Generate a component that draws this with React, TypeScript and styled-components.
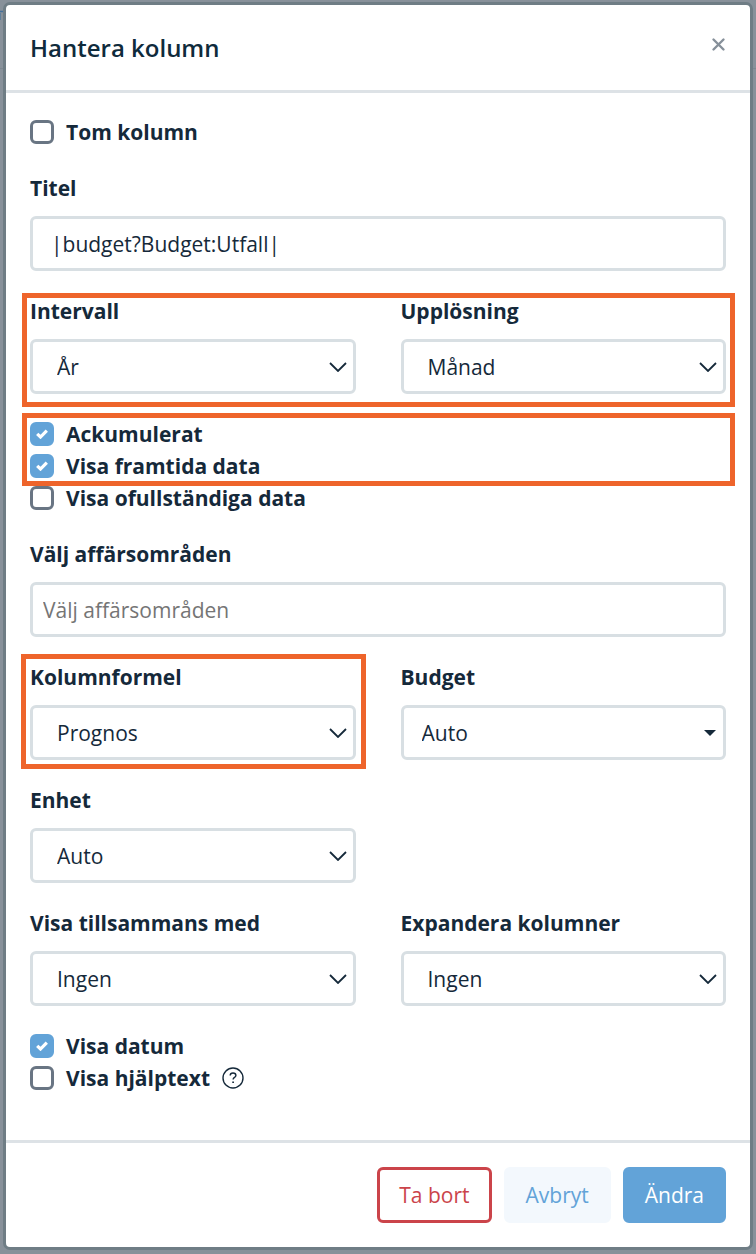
import React, { useId, useState } from "react";
import styled, { createGlobalStyle, css } from "styled-components";

const ink = "#15293a";
const line = "#d8dfe3";
const blue = "#62a3d8";
const red = "#cb444a";
const orange = "#ee642b";

const GlobalStyle = createGlobalStyle`
  *, *::before, *::after { box-sizing: border-box; }
  body {
    margin: 0;
    background: #88919a;
    color: ${ink};
    font-family: "Open Sans", "Noto Sans", sans-serif;
    font-size: 21px;
    line-height: 32px;
    font-variant-ligatures: none;
  }
  button, input, select { font: inherit; color: inherit; }
`;

const Backdrop = styled.div`
  position: relative;
  min-height: 100vh;
  padding: 2px 3px 4px;
  background: linear-gradient(#88919a 68px, #7d8790 68px, #7d8790 69px, #88919a 69px);
`;

const PageMark = styled.svg`
  position: absolute;
  top: 10px;
  left: 0;
`;

const Dialog = styled.section`
  position: relative;
  border: 3px solid #6f7d85;
  border-radius: 7px;
  background: #fff;
`;

const Header = styled.header`
  display: flex;
  align-items: flex-start;
  justify-content: space-between;
  padding: 27px 24px 26px;
  border-bottom: 3px solid #dde2e6;
`;

const Title = styled.h1`
  margin: 0;
  font-size: 24px;
  line-height: 32px;
  font-weight: 600;
  color: #0f2b3c;
`;

const CloseButton = styled.button`
  display: flex;
  padding: 5px 0;
  border: 0;
  background: none;
  color: #86909a;
  cursor: pointer;
`;

const Body = styled.form`
  display: flex;
  flex-direction: column;
  gap: 24px;
  padding: 23px 24px 46px;
`;

const highlight = css<{ $frame?: string }>`
  position: relative;
  ${({ $frame }) =>
    $frame &&
    css`
      &::after {
        content: "";
        position: absolute;
        inset: ${$frame};
        border: 5px solid ${orange};
        pointer-events: none;
      }
    `}
`;

const FieldRow = styled.div<{ $frame?: string }>`
  display: grid;
  grid-template-columns: 1fr 1fr;
  column-gap: 45px;
  ${highlight}
`;

const Field = styled.div<{ $frame?: string }>`
  display: flex;
  flex-direction: column;
  gap: 12px;
  min-width: 0;
  ${highlight}
`;

const FieldLabel = styled.label`
  font-weight: 700;
  line-height: 32px;
`;

const control = css`
  width: 100%;
  height: 55px;
  border: 3px solid ${line};
  border-radius: 6px;
  background: #fff;
  outline: none;
`;

const TextInput = styled.input<{ $inset: number }>`
  ${control}
  padding: 0 ${({ $inset }) => $inset}px;
  &::placeholder { color: #757575; opacity: 1; }
`;

const SelectWrap = styled.div`
  position: relative;
`;

const NativeSelect = styled.select<{ $inset: number }>`
  ${control}
  appearance: none;
  padding: 0 40px 0 ${({ $inset }) => $inset}px;
`;

const SelectIcon = styled.svg<{ $right: number }>`
  position: absolute;
  top: 50%;
  right: ${({ $right }) => $right}px;
  transform: translateY(-50%);
  pointer-events: none;
`;

const CheckGroup = styled.div<{ $frame?: string }>`
  ${highlight}
`;

const CheckRow = styled.div`
  display: flex;
  align-items: center;
  gap: 12px;
  height: 32px;
`;

const CheckLabel = styled.label`
  font-weight: 700;
`;

const CheckBox = styled.span`
  display: grid;
  width: 24px;
  height: 24px;
  & > * { grid-area: 1 / 1; }
  & > svg { pointer-events: none; place-self: center; }
`;

const CheckInput = styled.input`
  appearance: none;
  width: 24px;
  height: 24px;
  margin: 0;
  border: 3px solid #697583;
  border-radius: 6px;
  background: #fff;
  &:checked { border-color: ${blue}; background: ${blue}; }
`;

const HelpButton = styled.button`
  display: flex;
  padding: 0;
  border: 0;
  background: none;
`;

const Footer = styled.footer`
  display: flex;
  justify-content: flex-end;
  gap: 12px;
  padding: 24px;
  border-top: 3px solid #dde2e6;
`;

const tones = {
  danger: css`border-color: ${red}; background: #fff; color: ${red};`,
  quiet: css`border-color: #f3f8fd; background: #f3f8fd; color: ${blue};`,
  primary: css`border-color: ${blue}; background: ${blue}; color: #fff;`,
};

const Button = styled.button<{ $tone: keyof typeof tones }>`
  height: 56px;
  padding: 0 19px;
  border: 3px solid;
  border-radius: 6px;
  cursor: pointer;
  ${({ $tone }) => tones[$tone]}
`;

function SelectField({ label, value, caret, frame }: { label: string; value: string; caret?: boolean; frame?: string }) {
  const id = useId();
  return (
    <Field $frame={frame}>
      <FieldLabel htmlFor={id}>{label}</FieldLabel>
      <SelectWrap>
        <NativeSelect id={id} $inset={caret ? 18 : 24}>
          <option>{value}</option>
        </NativeSelect>
        {caret ? (
          <SelectIcon $right={10} width="12" height="6" viewBox="0 0 12 6" aria-hidden="true">
            <path d="M0 0h12L6 6z" fill={ink} />
          </SelectIcon>
        ) : (
          <SelectIcon $right={9} width="18" height="10" viewBox="0 0 18 10" aria-hidden="true">
            <path d="M1 1l8 8 8-8" fill="none" stroke={ink} strokeWidth="1.8" />
          </SelectIcon>
        )}
      </SelectWrap>
    </Field>
  );
}

function TextField({ label, inset, ...rest }: { label: string; inset: number; defaultValue?: string; placeholder?: string }) {
  const id = useId();
  return (
    <Field>
      <FieldLabel htmlFor={id}>{label}</FieldLabel>
      <TextInput id={id} type="text" $inset={inset} {...rest} />
    </Field>
  );
}

function Check({ label, initial = false, children }: { label: string; initial?: boolean; children?: React.ReactNode }) {
  const id = useId();
  const [on, setOn] = useState(initial);
  return (
    <CheckRow>
      <CheckBox>
        <CheckInput id={id} type="checkbox" checked={on} onChange={(e) => setOn(e.target.checked)} />
        {on && (
          <svg width="12" height="10" viewBox="0 0 12 10" aria-hidden="true">
            <path d="M1.2 4.8l3.3 3.2L10.8 1.6" fill="none" stroke="#fff" strokeWidth="3.2" />
          </svg>
        )}
      </CheckBox>
      <CheckLabel htmlFor={id}>{label}</CheckLabel>
      {children}
    </CheckRow>
  );
}

export default function App() {
  return (
    <>
      <GlobalStyle />
      <Backdrop>
        <PageMark width="6" height="11" viewBox="0 0 6 11" aria-hidden="true">
          <path d="M0 1.5h3Q5 1.5 5 4" fill="none" stroke="#44709a" strokeWidth="1.6" />
          <path d="M.5 3v7" stroke="#5f7f9b" />
        </PageMark>
        <Dialog role="dialog" aria-labelledby="dialog-title">
          <Header>
            <Title id="dialog-title">Hantera kolumn</Title>
            <CloseButton type="button" aria-label="Stäng">
              <svg width="15" height="15" viewBox="0 0 15 15" aria-hidden="true">
                <path d="M2.5 2.5l10 10M12.5 2.5l-10 10" stroke="currentColor" strokeWidth="2.4" strokeLinecap="round" />
              </svg>
            </CloseButton>
          </Header>
          <Body id="column-form">
            <CheckGroup>
              <Check label="Tom kolumn" />
            </CheckGroup>
            <TextField label="Titel" inset={18} defaultValue="|budget?Budget:Utfall|" />
            <FieldRow $frame="-2px -9px -13px -8px">
              <SelectField label="Intervall" value="År" />
              <SelectField label="Upplösning" value="Månad" />
            </FieldRow>
            <div>
              <CheckGroup $frame="-5px -9px -4px -8px">
                <Check label="Ackumulerat" initial />
                <Check label="Visa framtida data" initial />
              </CheckGroup>
              <Check label="Visa ofullständiga data" />
            </div>
            <TextField label="Välj affärsområden" inset={10} placeholder="Välj affärsområden" />
            <FieldRow>
              <SelectField label="Kolumnformel" value="Prognos" frame="-7px -10px -9px -9px" />
              <SelectField label="Budget" value="Auto" caret />
            </FieldRow>
            <FieldRow>
              <SelectField label="Enhet" value="Auto" />
            </FieldRow>
            <FieldRow>
              <SelectField label="Visa tillsammans med" value="Ingen" />
              <SelectField label="Expandera kolumner" value="Ingen" />
            </FieldRow>
            <CheckGroup>
              <Check label="Visa datum" initial />
              <Check label="Visa hjälptext">
                <HelpButton type="button" aria-label="Hjälp">
                  <svg width="22" height="22" viewBox="0 0 22 22" fill="none" stroke={ink} aria-hidden="true">
                    <circle cx="11" cy="11" r="10" strokeWidth="1.4" />
                    <path d="M8.2 8.6c0-1.7 1.2-2.6 2.8-2.6s2.9.9 2.9 2.4c0 1.9-2.8 2-2.8 4" strokeWidth="1.4" />
                    <path d="M11.1 14.4v1.7" strokeWidth="1.7" />
                  </svg>
                </HelpButton>
              </Check>
            </CheckGroup>
          </Body>
          <Footer>
            <Button type="button" $tone="danger">Ta bort</Button>
            <Button type="button" $tone="quiet">Avbryt</Button>
            <Button type="submit" form="column-form" $tone="primary">Ändra</Button>
          </Footer>
        </Dialog>
      </Backdrop>
    </>
  );
}
